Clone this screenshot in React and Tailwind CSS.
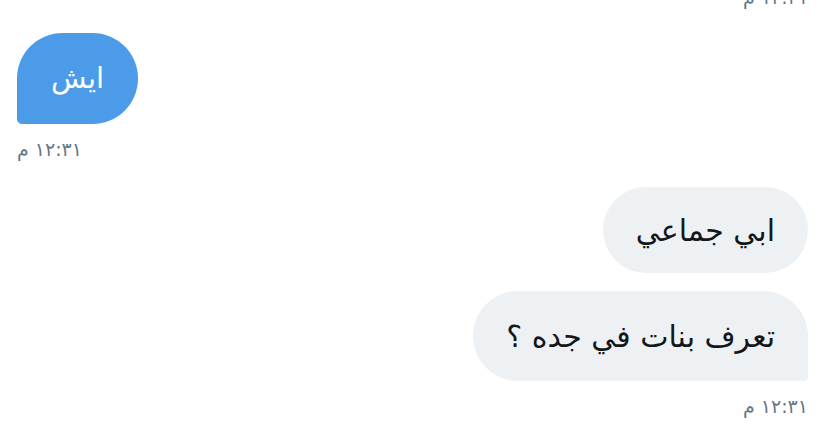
export default function App() {
  const font = { fontFamily: '"DejaVu Sans", sans-serif' };
  return (
    <div className="h-[426px] w-[827px] overflow-hidden bg-white pl-[17px] pr-[19px]" style={font}>
      {/* cut-off time of the previous message */}
      <div dir="rtl" className="-mt-[13px] text-right text-[19px] leading-5 text-[#657786]">
        ١٢:٣١ م
      </div>

      {/* incoming */}
      <div className="mt-[26px] flex flex-col items-start">
        <div
          dir="rtl"
          className="flex h-[91px] w-[121px] items-center justify-center rounded-[46px] rounded-bl-[5px] bg-[#4b9be9] text-[29px] text-white"
        >
          ايش
        </div>
        <div dir="rtl" className="mt-[15px] text-[19px] leading-5 text-[#657786]">
          ١٢:٣١ م
        </div>
      </div>

      {/* outgoing */}
      <div className="mt-[28px] flex flex-col items-end gap-[18px]">
        <div
          dir="rtl"
          className="flex h-[86px] items-center rounded-[43px] bg-[#eef1f3] px-[33px] text-[30px] text-[#14171a]"
        >
          ابي جماعي
        </div>
        <div
          dir="rtl"
          className="flex h-[90px] items-center rounded-[45px] rounded-br-[4px] bg-[#eef1f3] px-[33px] text-[30px] text-[#14171a]"
        >
          تعرف بنات في جده ؟
        </div>
      </div>
      <div dir="rtl" className="mt-[15px] text-right text-[19px] leading-5 text-[#657786]">
        ١٢:٣١ م
      </div>
    </div>
  );
}
